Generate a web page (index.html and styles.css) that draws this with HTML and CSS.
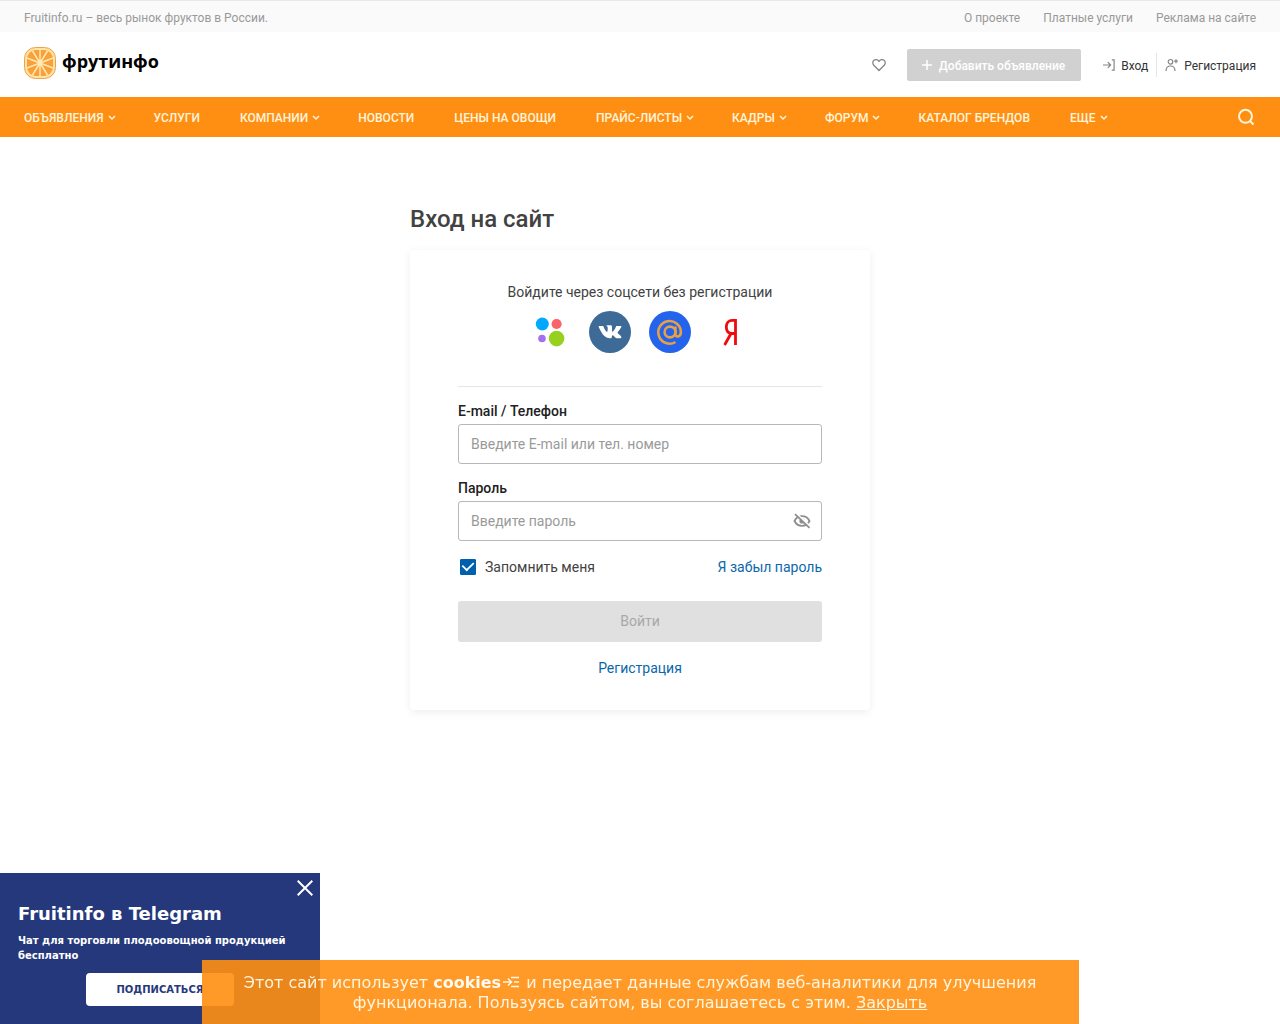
FILE: index.html
```html
<!DOCTYPE html>
<html lang="ru">
<head>
<meta charset="utf-8">
<meta name="viewport" content="width=device-width, initial-scale=1">
<title>Вход на сайт</title>
<link rel="stylesheet" href="styles.css">
</head>
<body>
<div class="topbar">
  <span>Fruitinfo.ru – весь рынок фруктов в России.</span>
  <div class="topbar-links">
    <a href="#">О проекте</a>
    <a href="#">Платные услуги</a>
    <a href="#">Реклама на сайте</a>
  </div>
</div>

<header class="header">
  <a class="logo" href="#">
    <svg width="32" height="32" viewBox="0 0 32 32" aria-hidden="true">
      <rect x="0.5" y="0.5" width="31" height="31" rx="11" fill="#ffe3a0" stroke="#f0a050"/>
      <rect x="3" y="3" width="26" height="26" rx="9" fill="#f9a03c"/>
      <path d="M16 2v28M3 11l26 10M3 21l26-10M8.500 4l15 24M23.500 4l-15 24" stroke="#ffe9b0" stroke-width="1.500"/>
      <circle cx="16" cy="16" r="2" fill="#ffe9b0"/>
    </svg>
    <span class="wordmark">фрутинфо</span>
  </a>
  <div class="header-actions">
    <a class="favorites" href="#" aria-label="Избранное">
      <svg width="14" height="14" viewBox="0 0 14 14" fill="none" stroke="#858585" stroke-width="1.300" stroke-linejoin="round"><path d="M7 12.500L1.800 7.200C.3 5.500.6 3.300 1.900 2.300 3.600 1 5.900 1.500 7 3.500 8.100 1.500 10.400 1 12.100 2.300c1.300 1 1.600 3.200.1 4.900z"/></svg>
    </a>
    <button class="add-button" type="button">
      <svg width="10" height="10" viewBox="0 0 10 10" stroke="#fff" stroke-width="1.500" aria-hidden="true"><path d="M5 0v10M0 5h10"/></svg>
      Добавить объявление
    </button>
    <div class="account">
      <a href="#">
        <svg width="12" height="12" viewBox="0 0 12 12" fill="none" stroke="#858585" stroke-width="1.200" aria-hidden="true"><path d="M0 6h7.500M4.800 3.200L7.600 6 4.800 8.800M8.800.8h2.300v10.400H8.800"/></svg>
        <span>Вход</span>
      </a>
      <a href="#">
        <svg width="13" height="14" viewBox="0 0 13 14" fill="none" stroke="#858585" stroke-width="1.200" aria-hidden="true"><circle cx="5.500" cy="3.800" r="2.300"/><path d="M1 13c0-3.300 1.800-5 4.500-5s4.500 1.700 4.500 5M11 1.200v4M9 3.200h4"/></svg>
        <span>Регистрация</span>
      </a>
    </div>
  </div>
</header>

<nav class="nav">
  <ul class="nav-list">
    <li><a class="has-menu" href="#">ОБЪЯВЛЕНИЯ<svg class="chevron" viewBox="0 0 8 8"><path d="M1 2l3 3 3-3"/></svg></a></li>
    <li><a href="#">УСЛУГИ</a></li>
    <li><a class="has-menu" href="#">КОМПАНИИ<svg class="chevron" viewBox="0 0 8 8"><path d="M1 2l3 3 3-3"/></svg></a></li>
    <li><a href="#">НОВОСТИ</a></li>
    <li><a href="#">ЦЕНЫ НА ОВОЩИ</a></li>
    <li><a class="has-menu" href="#">ПРАЙС-ЛИСТЫ<svg class="chevron" viewBox="0 0 8 8"><path d="M1 2l3 3 3-3"/></svg></a></li>
    <li><a class="has-menu" href="#">КАДРЫ<svg class="chevron" viewBox="0 0 8 8"><path d="M1 2l3 3 3-3"/></svg></a></li>
    <li><a class="has-menu" href="#">ФОРУМ<svg class="chevron" viewBox="0 0 8 8"><path d="M1 2l3 3 3-3"/></svg></a></li>
    <li><a href="#">КАТАЛОГ БРЕНДОВ</a></li>
    <li><a class="has-menu" href="#">ЕЩЕ<svg class="chevron" viewBox="0 0 8 8"><path d="M1 2l3 3 3-3"/></svg></a></li>
  </ul>
  <button class="search" type="button" aria-label="Поиск">
    <svg width="20" height="20" viewBox="0 0 20 20" fill="none" stroke="#fff4dc" stroke-width="2"><circle cx="9.500" cy="9.300" r="6.500"/><path d="M14 14l3.500 3.500"/></svg>
  </button>
</nav>

<main class="main">
  <h1>Вход на сайт</h1>
  <form class="card">
    <p class="social-title">Войдите через соцсети без регистрации</p>
    <div class="socials">
      <a href="#" aria-label="uID"><svg viewBox="0 0 42 42"><circle cx="13.300" cy="13" r="6.500" fill="#00a8ff"/><circle cx="27.600" cy="13" r="5.100" fill="#fb636b"/><circle cx="13" cy="27.500" r="3.800" fill="#a56ff0"/><circle cx="27.600" cy="27.600" r="7.800" fill="#98d01f"/></svg></a>
      <a href="#" aria-label="ВКонтакте"><svg viewBox="0 0 42 42"><circle cx="21" cy="21" r="21" fill="#3d6a96"/><path transform="translate(2.500 2.500) scale(.88)" fill="#fff" d="M20.500 28h1.600s.5-.1.700-.3c.2-.2.200-.7.200-.7s0-2.100 1-2.400c.9-.3 2.200 2.100 3.500 3 1 .7 1.800.5 1.800.5l3.500 0s1.800-.1 1-1.500c-.1-.1-.5-1-2.600-2.900-2.200-2-1.900-1.700.7-5.200 1.600-2.100 2.300-3.400 2.100-3.900-.2-.5-1.400-.4-1.400-.4l-3.900 0s-.3 0-.5.100c-.2.100-.3.400-.3.400s-.6 1.600-1.400 3c-1.700 2.900-2.400 3.100-2.700 2.900-.7-.4-.5-1.700-.5-2.700 0-2.900.4-4.100-.9-4.400-.4-.1-.7-.2-1.800-.2-1.400 0-2.500 0-3.200.3-.4.200-.8.700-.6.700.3 0 .9.200 1.200.6.400.6.400 1.900.4 1.900s.2 3.500-.6 4c-.5.300-1.300-.3-2.800-3-.8-1.400-1.400-2.900-1.400-2.900s-.100-.3-.3-.4c-.3-.2-.6-.3-.6-.3l-3.700 0s-.6 0-.8.300c-.2.200 0 .7 0 .7s2.900 6.800 6.200 10.200C17.200 28.300 20.500 28 20.500 28z"/></svg></a>
      <a href="#" aria-label="Mail.ru"><svg viewBox="0 0 42 42"><circle cx="21" cy="21" r="21" fill="#2463ec"/><g fill="none" stroke="#e7a044" stroke-width="2.600"><circle cx="21" cy="21" r="5.400"/><path d="M26.400 15.500v7.300c0 4 5.500 3.700 5.500-1.800A11.300 11.300 0 1 0 26.500 31"/></g></svg></a>
      <a href="#" aria-label="Яндекс"><svg viewBox="0 0 42 42" fill="none" stroke="#ef0b0b" stroke-width="2.800"><path d="M26.500 34V9.400h-3.200c-3.600 0-6 2.800-6 6.700 0 4.300 2.200 6.400 5.800 6.400h3.400M22 22.500L15.600 34"/></svg></a>
    </div>
    <hr>
    <label class="field-label" for="login">E-mail / Телефон</label>
    <input class="field" id="login" type="text" placeholder="Введите E-mail или тел. номер">
    <label class="field-label" for="password">Пароль</label>
    <div class="password">
      <input class="field" id="password" type="password" placeholder="Введите пароль">
      <button class="eye" type="button" aria-label="Показать пароль">
        <svg width="18" height="16" viewBox="0 0 18 16" fill="none" stroke="#8f8f8f" stroke-width="1.800"><path d="M1.500 8C3 4.800 5.800 3.200 9 3.200s6 1.600 7.500 4.800C15 11.200 12.200 12.800 9 12.800S3 11.200 1.500 8z"/><circle cx="9" cy="8" r="2.600" fill="#8f8f8f" stroke="none"/><path d="M3.500.8L18 14" stroke="#fff"/><path d="M2 1.200L16.500 14.800"/></svg>
      </button>
    </div>
    <div class="options">
      <label class="remember"><input type="checkbox" checked>Запомнить меня</label>
      <a href="#">Я забыл пароль</a>
    </div>
    <button class="submit" type="submit" disabled>Войти</button>
    <a class="register" href="#">Регистрация</a>
  </form>
</main>

<aside class="telegram">
  <button class="close" type="button" aria-label="Закрыть">
    <svg width="16" height="16" viewBox="0 0 16 16" stroke="#fff" stroke-width="2"><path d="M.7.7l14.600 14.600M15.300.7L.7 15.300"/></svg>
  </button>
  <h2>Fruitinfo в Telegram</h2>
  <p>Чат для торговли плодоовощной продукцией бесплатно</p>
  <a class="subscribe" href="#">ПОДПИСАТЬСЯ</a>
</aside>

<div class="cookies">
  Этот сайт использует <b>cookies</b><svg class="cookies-icon" width="18" height="12" viewBox="0 0 18 12" fill="none" stroke="#fff8e4" stroke-width="1.500" aria-hidden="true"><path d="M0 6h8M5 2.500L8.500 6 5 9.500M8 1.500h8M11 6h5M8 10.500h8"/></svg>
  и передает данные службам веб-аналитики для улучшения функционала. Пользуясь сайтом, вы соглашаетесь с этим. <a href="#">Закрыть</a>
</div>
</body>
</html>
```
FILE: styles.css
```css
* {
  box-sizing: border-box;
}

body {
  margin: 0;
  font: 14px/20px Roboto, "Liberation Sans", sans-serif;
  color: #424242;
  background: #fff;
}

a {
  color: inherit;
  text-decoration: none;
}

button {
  font: inherit;
  border: 0;
  padding: 0;
  background: none;
  cursor: pointer;
}

svg {
  display: block;
  flex: none;
}

.topbar {
  display: flex;
  justify-content: space-between;
  align-items: center;
  height: 32px;
  padding: 2px 24px 0;
  border-top: 1px solid #e8e8e8;
  background: #fafafa;
  color: #999;
  font-size: 12px;
}

.topbar-links {
  display: flex;
  gap: 23px;
}

.header {
  display: flex;
  justify-content: space-between;
  align-items: center;
  height: 65px;
  padding: 0 24px;
  font-size: 12px;
}

.logo {
  display: flex;
  align-items: center;
  gap: 6px;
  padding-bottom: 3px;
}

.wordmark {
  color: #000;
  font: 700 18px/26px "Open Sans", sans-serif;
  padding-bottom: 4px;
}

.header-actions,
.account,
.account a {
  display: flex;
  align-items: center;
}

.account a {
  gap: 6px;
  padding: 1px 8px;
  color: #333;
}

.account span {
  padding-top: 2px;
}

.account a + a {
  border-left: 1px solid #e5e5e5;
  padding-right: 0;
}

.favorites {
  margin-right: 21px;
}

.add-button {
  display: flex;
  align-items: center;
  gap: 7px;
  height: 32px;
  padding: 2px 16px 0 15px;
  margin-right: 14px;
  border-radius: 2px;
  background: #d1d1d1;
  color: #fff;
  font-weight: 500;
}

.add-button svg {
  margin-bottom: 2px;
}

.nav {
  display: flex;
  justify-content: space-between;
  align-items: center;
  height: 40px;
  padding: 0 24px;
  background: #ff8f12;
  color: #fff4dc;
  font-size: 12px;
  font-weight: 500;
}

.nav-list {
  display: flex;
  gap: 40px;
  margin: 0;
  padding: 2px 0 0;
  list-style: none;
  white-space: nowrap;
}

.has-menu {
  display: flex;
  align-items: center;
  gap: 4px;
  margin-right: -2px;
}

.chevron {
  width: 8px;
  height: 8px;
  fill: none;
  stroke: #fff4dc;
  stroke-width: 1.5;
}

.main {
  width: 100%;
  max-width: 460px;
  margin: 0 auto;
  padding: 66px 0;
}

h1 {
  margin: 0 0 15px;
  font-size: 24px;
  line-height: 32px;
  font-weight: 500;
}

.card {
  padding: 32px 48px;
  border-radius: 4px;
  box-shadow: 0 2px 8px rgba(0, 0, 0, 0.07);
}

.social-title {
  margin: 0 0 9px;
  text-align: center;
}

.socials {
  display: flex;
  justify-content: center;
  gap: 18px;
}

.socials svg {
  width: 42px;
  height: 42px;
}

hr {
  margin: 33px 0 14px;
  border: 0;
  border-top: 1px solid #e6e6e6;
}

.field-label {
  display: block;
  margin-bottom: 3px;
  color: #212121;
  font-weight: 500;
}

.field {
  display: block;
  width: 100%;
  height: 40px;
  margin-bottom: 14px;
  padding: 0 12px;
  border: 1px solid #b8b8b8;
  border-radius: 3px;
  background: #fff;
  color: #333;
  font: inherit;
}

.field::placeholder {
  color: #9a9a9a;
}

.password {
  position: relative;
}

.eye {
  position: absolute;
  top: 12px;
  right: 11px;
}

.options {
  display: flex;
  justify-content: space-between;
  margin: 16px 0 24px;
}

.remember {
  display: flex;
  align-items: center;
  gap: 9px;
}

.remember input {
  appearance: none;
  display: grid;
  place-items: center;
  width: 16px;
  height: 16px;
  margin: 0 0 0 2px;
  border: 1px solid #0060ad;
  border-radius: 1px;
}

.remember input:checked {
  background: #0060ad;
}

.remember input:checked::before {
  content: "";
  width: 10px;
  height: 6px;
  margin-bottom: 4px;
  border: solid #fff;
  border-width: 0 0 2px 2px;
  transform: rotate(-45deg) scale(0.9);
}

.options a,
.register {
  color: #0a67aa;
}

.submit {
  display: block;
  width: 100%;
  height: 41px;
  padding-bottom: 2px;
  border-radius: 3px;
  background: #e0e0e0;
  color: #a8a8a8;
}

.register {
  display: block;
  margin-top: 16px;
  text-align: center;
}

.telegram {
  position: fixed;
  left: 0;
  bottom: 0;
  width: 320px;
  padding: 30px 18px 18px;
  background: #26387c;
  color: #fff;
  font: 700 10px/15px "DejaVu Sans", sans-serif;
}

.telegram h2 {
  margin: 0 0 8px;
  font-size: 18px;
  line-height: 22px;
}

.telegram p {
  margin: 0 0 10px;
}

.close {
  position: absolute;
  top: 7px;
  right: 7px;
}

.subscribe {
  display: block;
  width: 148px;
  margin: 0 auto;
  border-radius: 4px;
  background: #fff;
  color: #26387c;
  line-height: 33px;
  text-align: center;
}

.cookies {
  position: fixed;
  left: 0;
  right: 0;
  bottom: 0;
  max-width: 877px;
  margin: 0 auto;
  padding: 13px 40px 11px;
  background: rgba(255, 143, 18, 0.9);
  color: #fff4dc;
  font: 16px/20px "DejaVu Sans", sans-serif;
  text-align: center;
}

.cookies b {
  color: #fffbef;
}

.cookies a {
  text-decoration: underline;
}

.cookies-icon {
  display: inline-block;
  margin-left: 2px;
}
```
